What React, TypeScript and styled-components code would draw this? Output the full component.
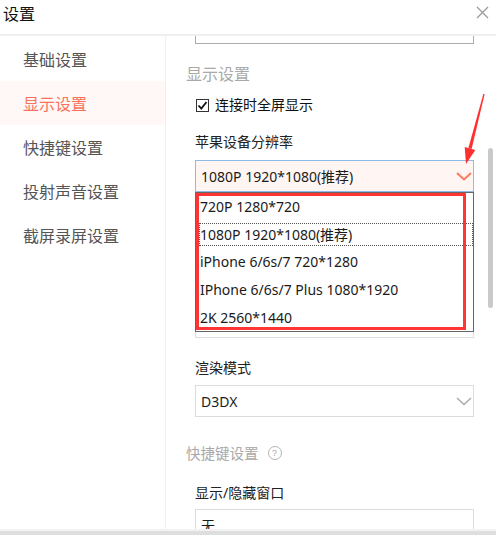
import React from 'react';
import styled, { createGlobalStyle } from 'styled-components';

const GlobalStyle = createGlobalStyle`
  html, body {
    margin: 0;
    padding: 0;
    background: #fff;
    overflow: hidden;
  }
  body {
    font-family: "Noto Sans", "Noto Sans CJK SC", sans-serif;
    color: #222;
  }
`;

const resolutions = [
  '720P 1280*720',
  '1080P 1920*1080(推荐)',
  'iPhone 6/6s/7 720*1280',
  'IPhone 6/6s/7 Plus 1080*1920',
  '2K 2560*1440',
];

const menu = ['基础设置', '显示设置', '快捷键设置', '投射声音设置', '截屏录屏设置'];

const Chevron = ({ color, width }: { color: string; width: number }) => (
  <svg width="16" height="9" viewBox="0 0 16 9">
    <polyline points="1,1 8,7.5 15,1" fill="none" stroke={color} strokeWidth={width} />
  </svg>
);

const App = () => (
  <>
    <GlobalStyle />
    <Window>
      <TitleBar>
        <Title>设置</Title>
        <Close>
          <svg width="13" height="13" viewBox="0 0 13 13">
            <path d="M1 1 L12 12 M12 1 L1 12" stroke="#9a9a9a" strokeWidth="1.3" />
          </svg>
        </Close>
      </TitleBar>
      <Body>
        <Sidebar>
          {menu.map((m) => (
            <NavItem key={m} $active={m === '显示设置'}>{m}</NavItem>
          ))}
        </Sidebar>
        <Main>
          <Form>
            <TopEdge />
          </Form>
          <Heading $size={16} $top={19}>显示设置</Heading>
          <Form>
            <CheckRow>
              <CheckBox>
                <svg width="11" height="11" viewBox="0 0 11 11">
                  <polyline points="1.5,5.5 4.3,8.5 9.5,2" fill="none" stroke="#111" strokeWidth="1.8" />
                </svg>
              </CheckBox>
              连接时全屏显示
            </CheckRow>
            <Label $top={17}>苹果设备分辨率</Label>
            <SelectWrap>
              <Select $open>
                <span>1080P 1920*1080(推荐)</span>
                <Chevron color="#ff7a5e" width={2} />
              </Select>
              <List>
                {resolutions.map((r, i) => (
                  <Option key={r}>
                    {r}
                    {i === 1 && <Focus />}
                  </Option>
                ))}
                <Marker />
              </List>
            </SelectWrap>
            <Select $top={114} />
            <Label $top={20}>渲染模式</Label>
            <Select $top={7}>
              <span>D3DX</span>
              <Chevron color="#a8a8a8" width={1.4} />
            </Select>
          </Form>
          <Heading $size={14.5} $top={25}>
            快捷键设置
            <Help>?</Help>
          </Heading>
          <Form>
            <Label $top={19}>显示/隐藏窗口</Label>
            <Select $top={6}>
              <span>无</span>
            </Select>
          </Form>
          <Thumb />
        </Main>
      </Body>
      <BottomStrip />
      <Arrow width="496" height="535" viewBox="0 0 496 535">
        <polygon points="483.4,93.8 484.6,94.2 471.6,148.9 468.4,148.1" fill="#ff2f2f" />
        <polygon points="464.7,147.1 475.3,149.9 466,164" fill="#ff2f2f" />
      </Arrow>
    </Window>
  </>
);

const Window = styled.div`
  position: relative;
  width: 496px;
  height: 535px;
  display: flex;
  flex-direction: column;
  overflow: hidden;
  background: #fff;
`;

const TitleBar = styled.div`
  flex: none;
  height: 30px;
  display: flex;
  align-items: flex-start;
  justify-content: space-between;
  padding: 4px 7px 0 3px;
  border-bottom: 2px solid #efefef;
`;

const Title = styled.div`
  font-size: 16px;
  line-height: 20px;
  color: #111;
`;

const Close = styled.div`
  display: flex;
  padding-top: 2px;
`;

const Body = styled.div`
  flex: 1;
  display: flex;
  min-height: 0;
`;

const Sidebar = styled.div`
  width: 165px;
  flex: none;
  padding-top: 1px;
  border-right: 1px solid #f0f0f0;
`;

const NavItem = styled.div<{ $active?: boolean }>`
  height: 44px;
  display: flex;
  align-items: center;
  padding-left: 23px;
  font-size: 16px;
  color: ${(p) => (p.$active ? '#f8735c' : '#555')};
  background: ${(p) => (p.$active ? '#fff8f6' : 'transparent')};
`;

const Main = styled.div`
  position: relative;
  flex: 1;
  padding-left: 20px;
  overflow: hidden;
`;

const Form = styled.div`
  margin-left: 9px;
  width: 279px;
`;

const TopEdge = styled.div`
  height: 7px;
  border: 1px solid #adadad;
  border-top: none;
`;

const Heading = styled.div<{ $size: number; $top: number }>`
  display: flex;
  align-items: center;
  margin-top: ${(p) => p.$top}px;
  font-size: ${(p) => p.$size}px;
  line-height: 22px;
  color: #a9a9a9;
`;

const Help = styled.span`
  width: 12px;
  height: 12px;
  margin-left: 9px;
  border: 1px solid #b4b4b4;
  border-radius: 50%;
  font-size: 9px;
  line-height: 12px;
  text-align: center;
  color: #aaa;
  font-family: "Liberation Sans", sans-serif;
`;

const CheckRow = styled.div`
  display: flex;
  align-items: center;
  gap: 6px;
  margin-top: 10px;
  margin-left: 1px;
  font-size: 14px;
  line-height: 20px;
  color: #111;
`;

const CheckBox = styled.span`
  width: 11px;
  height: 11px;
  border: 1px solid #333;
  background: #fff;
  display: flex;
  align-items: center;
  justify-content: center;
`;

const Label = styled.div<{ $top: number }>`
  margin-top: ${(p) => p.$top}px;
  font-size: 14px;
  line-height: 20px;
  color: #222;
`;

const SelectWrap = styled.div`
  position: relative;
  margin-top: 8px;
`;

const Select = styled.div<{ $open?: boolean; $top?: number }>`
  height: 32px;
  box-sizing: border-box;
  margin-top: ${(p) => p.$top ?? 0}px;
  display: flex;
  align-items: center;
  justify-content: space-between;
  padding: 0 1px 0 5px;
  font-size: 14px;
  color: #1c1c1c;
  background: ${(p) => (p.$open ? '#fff5f2' : '#fff')};
  border: 1px solid ${(p) => (p.$open ? '#8fbbe9' : '#dcdcdc')};
`;

const List = styled.div`
  position: absolute;
  top: 100%;
  left: 0;
  width: 279px;
  box-sizing: border-box;
  border: 1px solid #666;
  background: #fff;
  z-index: 2;
`;

const Option = styled.div`
  position: relative;
  height: 27.6px;
  display: flex;
  align-items: center;
  padding-left: 4px;
  font-size: 14px;
  color: #1a1a1a;
`;

const Focus = styled.span`
  position: absolute;
  left: 3px;
  right: 0;
  top: 2px;
  bottom: 2px;
  border: 1px dotted #555;
`;

const Marker = styled.div`
  position: absolute;
  top: 0;
  left: 0;
  width: 270px;
  height: 137px;
  box-sizing: border-box;
  border: 3px solid #ff3535;
`;

const Thumb = styled.div`
  position: absolute;
  top: 112px;
  left: 322px;
  width: 5px;
  height: 160px;
  border-radius: 3px;
  background: #cacaca;
`;

const BottomStrip = styled.div`
  flex: none;
  height: 4px;
  border-top: 2px solid #f2f2f2;
  background: #dedede;
`;

const Arrow = styled.svg`
  position: absolute;
  top: 0;
  left: 0;
  pointer-events: none;
  z-index: 5;
`;

export default App;
